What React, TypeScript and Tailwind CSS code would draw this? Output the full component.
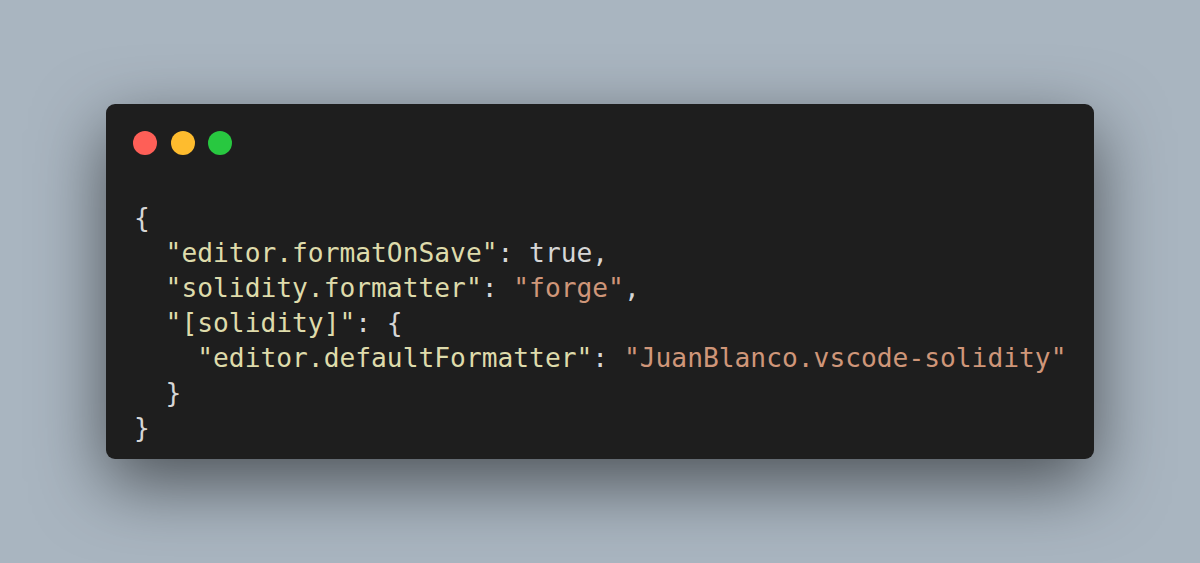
const KEY = 'text-[#dedbab]';
const STR = 'text-[#cf9679]';
const PUN = 'text-[#d6d6d6]';

type Tok = { t: string; c: string };

const lines: Tok[][] = [
  [{ t: '{', c: PUN }],
  [
    { t: '  ', c: PUN },
    { t: '"editor.formatOnSave"', c: KEY },
    { t: ': true,', c: PUN },
  ],
  [
    { t: '  ', c: PUN },
    { t: '"solidity.formatter"', c: KEY },
    { t: ': ', c: PUN },
    { t: '"forge"', c: STR },
    { t: ',', c: PUN },
  ],
  [
    { t: '  ', c: PUN },
    { t: '"[solidity]"', c: KEY },
    { t: ': {', c: PUN },
  ],
  [
    { t: '    ', c: PUN },
    { t: '"editor.defaultFormatter"', c: KEY },
    { t: ': ', c: PUN },
    { t: '"JuanBlanco.vscode-solidity"', c: STR },
  ],
  [{ t: '  }', c: PUN }],
  [{ t: '}', c: PUN }],
];

export default function App() {
  return (
    <div className="flex h-[563px] w-[1200px] items-center justify-center bg-[#a9b5c0]">
      <div className="h-[355px] w-[988px] rounded-[9px] bg-[#1e1e1e] pt-[27px] pr-[28px] pb-[14px] pl-[27px] shadow-[0_24px_70px_rgba(0,0,0,0.55)]">
        <div className="flex gap-[13.5px]">
          <span className="h-6 w-6 rounded-full bg-[#fe5f57]" />
          <span className="h-6 w-6 rounded-full bg-[#febc2e]" />
          <span className="h-6 w-6 rounded-full bg-[#28c840]" />
        </div>
        <pre className="mt-[46px] pl-[1px] font-['DejaVu_Sans_Mono',monospace] text-[26.25px] leading-[35px]">
          {lines.map((ln, i) => (
            <div key={i}>
              {ln.map((tk, j) => (
                <span key={j} className={tk.c}>
                  {tk.t}
                </span>
              ))}
            </div>
          ))}
        </pre>
      </div>
    </div>
  );
}
